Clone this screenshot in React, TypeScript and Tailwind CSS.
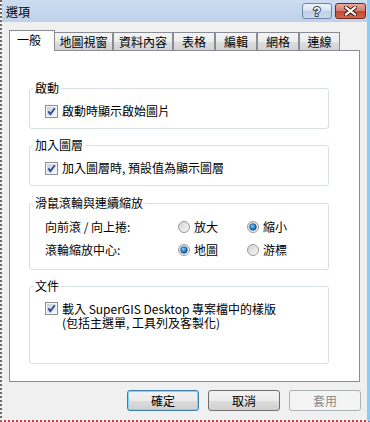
import type { ReactNode } from 'react';

const TAB_BG = 'bg-[linear-gradient(#f4f4f4_0%,#ececec_50%,#dedede_51%,#d2d2d2_100%)]';

function CheckBox() {
  return (
    <svg width="13" height="13" viewBox="0 0 13 13" className="shrink-0">
      <defs>
        <linearGradient id="cb-fill" x1="0" y1="0" x2="1" y2="1">
          <stop offset="0" stopColor="#c9ced6" />
          <stop offset="1" stopColor="#f8f9fa" />
        </linearGradient>
      </defs>
      <rect x="0.5" y="0.5" width="12" height="12" fill="#f6f6f6" stroke="#8e8f8f" />
      <rect x="2" y="2" width="9" height="9" fill="url(#cb-fill)" />
      <path d="M3.3 6.4 L5.4 9.1 L9.8 3.3" fill="none" stroke="#2d4c9a" strokeWidth="1.9" />
    </svg>
  );
}

function Radio({ on = false }: { on?: boolean }) {
  return (
    <svg width="12" height="12" viewBox="0 0 12 12" className="shrink-0">
      <defs>
        <linearGradient id="rd-ring" x1="0" y1="0" x2="1" y2="1">
          <stop offset="0" stopColor="#cfd1d4" />
          <stop offset="1" stopColor="#f9f9f9" />
        </linearGradient>
        <radialGradient id="rd-dot" cx="0.4" cy="0.35" r="0.7">
          <stop offset="0" stopColor="#8fd3ff" />
          <stop offset="0.5" stopColor="#2a8ad8" />
          <stop offset="1" stopColor="#0e4b8c" />
        </radialGradient>
      </defs>
      <circle cx="6" cy="6" r="5.5" fill="url(#rd-ring)" stroke="#9c9c9c" />
      {on && <circle cx="6" cy="6" r="3.3" fill="url(#rd-dot)" stroke="#1b4f86" strokeWidth="0.7" />}
    </svg>
  );
}

function Group({ title, children, className }: { title: string; children: ReactNode; className: string }) {
  return (
    <fieldset className={`ml-[19px] w-[300px] rounded-[3px] border border-[#d5dfe5] p-0 ${className}`}>
      <legend className="ml-[3px] px-[2px] leading-[14px]">{title}</legend>
      {children}
    </fieldset>
  );
}

function Button({ children, kind = 'normal' }: { children: ReactNode; kind?: 'normal' | 'default' | 'disabled' }) {
  const look =
    kind === 'disabled'
      ? 'border-[#adb2b5] bg-[#f4f4f4] text-[#8a8a8a]'
      : kind === 'default'
        ? 'border-[#3c7fb1] bg-[linear-gradient(#f2f2f2_0%,#ebebeb_50%,#dddddd_51%,#cfcfcf_100%)] shadow-[inset_0_0_0_1px_#7fd4f6] text-black'
        : 'border-[#707070] bg-[linear-gradient(#f2f2f2_0%,#ebebeb_50%,#dddddd_51%,#cfcfcf_100%)] text-black';
  return (
    <button
      type="button"
      className={`flex h-[21px] w-[72px] items-center justify-center rounded-[3px] border leading-[14px] ${look}`}
    >
      {children}
    </button>
  );
}

export default function App() {
  return (
    <div className="flex h-[422px] w-[370px] flex-col overflow-hidden border-b-2 border-l-2 border-r-[3px] border-dotted border-b-[#d23b3b] border-l-[#6b6b6b] border-r-[#8dcdf3] bg-[#f0f0f0] font-['Noto_Sans_CJK_TC','Liberation_Sans',sans-serif] text-[12px] text-black [border-right-style:solid]">
      {/* title bar */}
      <div className="flex h-[22px] shrink-0 items-center bg-[linear-gradient(#cddcef,#bed2ea)] pl-[4px] pr-[1px]">
        <span className="pt-[1px] leading-[14px]">選項</span>
        <div className="ml-auto flex gap-[3px]">
          <div className="flex h-[16px] w-[30px] items-center justify-center rounded-[3px] border border-[#6f86a6] bg-[linear-gradient(#eef3fa_0%,#d6e2f1_50%,#bfd0e6_51%,#c9d8ec_100%)]">
            <svg width="10" height="13" viewBox="0 0 10 13">
              <text
                x="5"
                y="11"
                textAnchor="middle"
                fontSize="12"
                fontWeight="bold"
                fontFamily="Liberation Sans, sans-serif"
                fill="#ffffff"
                stroke="#3a4453"
                strokeWidth="2"
                paintOrder="stroke"
              >
                ?
              </text>
            </svg>
          </div>
          <div className="flex h-[16px] w-[31px] items-center justify-center rounded-[3px] border border-[#6e2b20] bg-[linear-gradient(#e8a99b_0%,#d67a66_50%,#c2472f_51%,#d0654d_100%)]">
            <svg width="13" height="10" viewBox="0 0 13 10">
              <path d="M2 1.5 L11 8.5 M11 1.5 L2 8.5" stroke="#3b1710" strokeWidth="4" strokeLinecap="square" />
              <path d="M2 1.5 L11 8.5 M11 1.5 L2 8.5" stroke="#ffffff" strokeWidth="2.2" strokeLinecap="square" />
            </svg>
          </div>
        </div>
      </div>

      {/* tabs */}
      <div className="ml-[7px] mt-[8px] flex h-[20px] shrink-0 items-end">
        <div className="relative z-10 -mb-px flex h-[21px] w-[46px] items-center border border-b-0 border-[#898c95] bg-white pb-[2px] pl-[7px] leading-[14px]">
          一般
        </div>
        <div className={`flex h-[18px] w-[58px] items-center justify-center border-r border-t border-[#898c95] leading-[14px] ${TAB_BG}`}>
          地圖視窗
        </div>
        <div className={`flex h-[18px] w-[60px] items-center justify-center border border-b-0 border-[#898c95] leading-[14px] ${TAB_BG}`}>
          資料內容
        </div>
        <div className={`flex h-[18px] w-[42px] items-center justify-center border border-b-0 border-[#898c95] leading-[14px] ${TAB_BG}`}>
          表格
        </div>
        <div className={`flex h-[18px] w-[42px] items-center justify-center border border-b-0 border-[#898c95] leading-[14px] ${TAB_BG}`}>
          編輯
        </div>
        <div className={`flex h-[18px] w-[42px] items-center justify-center border border-b-0 border-[#898c95] leading-[14px] ${TAB_BG}`}>
          網格
        </div>
        <div className={`flex h-[18px] w-[41px] items-center justify-center border border-b-0 border-[#898c95] leading-[14px] ${TAB_BG}`}>
          連線
        </div>
      </div>

      {/* panel */}
      <div className="ml-[7px] h-[332px] w-[351px] shrink-0 border border-[#898c95] bg-white">
        <Group title="啟動" className="mt-[30px] pb-[10px]">
          <div className="mt-[9px] flex h-[14px] items-center gap-[4px] pl-[15px] leading-[14px]">
            <CheckBox />
            <span>啟動時顯示啟始圖片</span>
          </div>
        </Group>

        <Group title="加入圖層" className="mt-[9px] pb-[10px]">
          <div className="mt-[9px] flex h-[14px] items-center gap-[4px] pl-[15px] leading-[14px]">
            <CheckBox />
            <span>加入圖層時, 預設值為顯示圖層</span>
          </div>
        </Group>

        <Group title="滑鼠滾輪與連續縮放" className="mt-[10px] pb-[12px]">
          <div className="mt-[10px] grid grid-cols-[133px_69px_1fr] gap-y-[9px] pl-[15px] leading-[14px]">
            <span>向前滾 / 向上捲:</span>
            <span className="flex items-center gap-[4px]">
              <Radio />
              放大
            </span>
            <span className="flex items-center gap-[4px]">
              <Radio on />
              縮小
            </span>
            <span>滾輪縮放中心:</span>
            <span className="flex items-center gap-[4px]">
              <Radio on />
              地圖
            </span>
            <span className="flex items-center gap-[4px]">
              <Radio />
              游標
            </span>
          </div>
        </Group>

        <Group title="文件" className="mt-[9px] pb-[33px]">
          <div className="mt-[9px] flex items-start gap-[4px] pl-[15px] leading-[14px]">
            <CheckBox />
            <div>
              <div>載入 SuperGIS Desktop 專案檔中的樣版</div>
              <div>(包括主選單, 工具列及客製化)</div>
            </div>
          </div>
        </Group>
      </div>

      {/* buttons */}
      <div className="mt-[8px] flex shrink-0 gap-[9px] pl-[125px]">
        <Button kind="default">確定</Button>
        <Button>取消</Button>
        <Button kind="disabled">套用</Button>
      </div>
    </div>
  );
}
